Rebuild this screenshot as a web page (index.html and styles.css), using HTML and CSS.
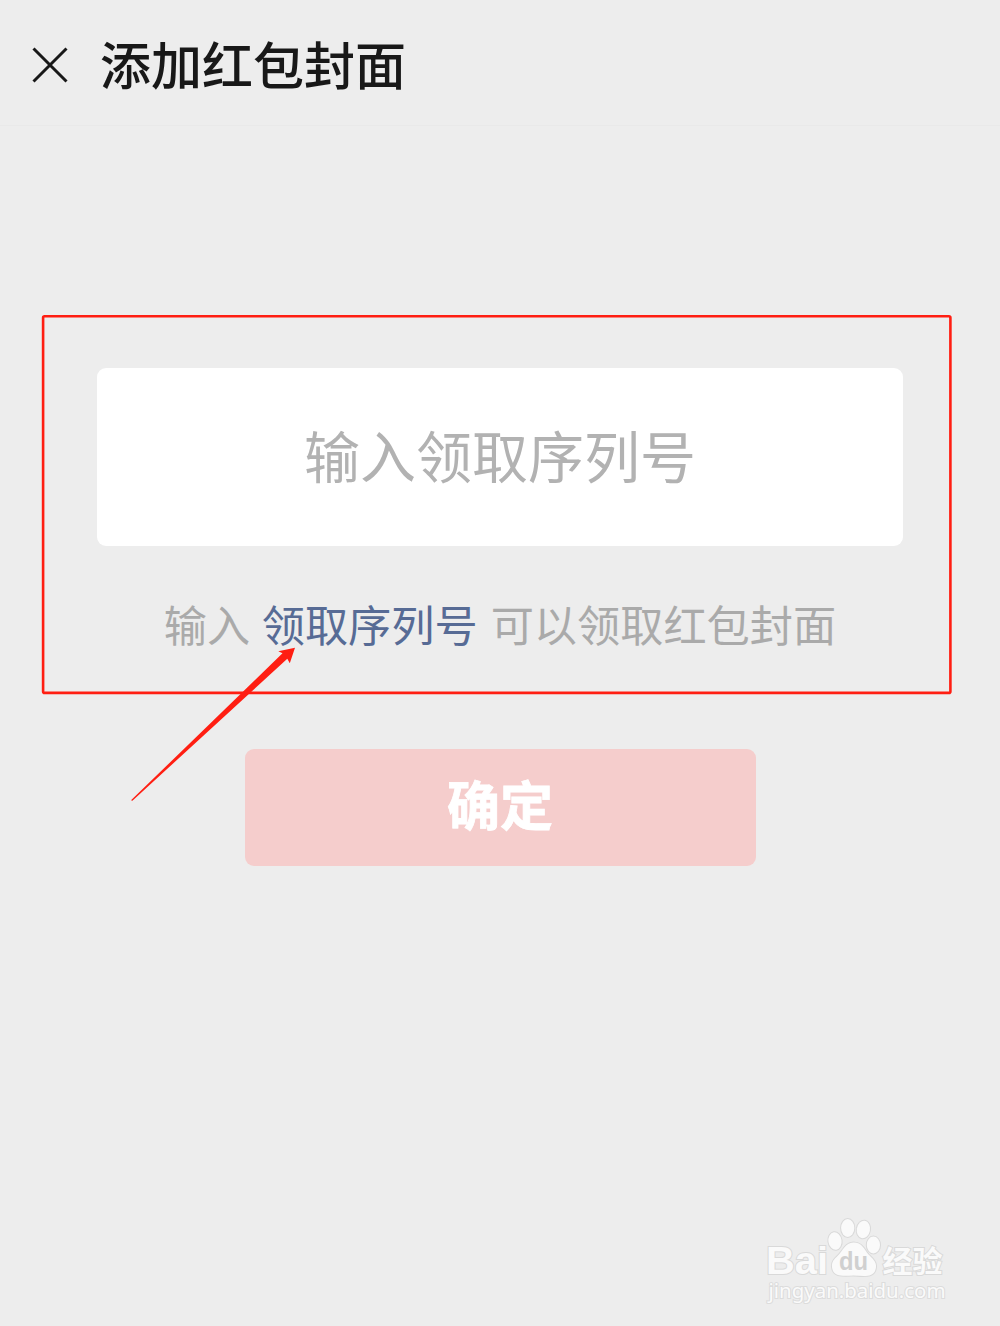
FILE: index.html
```html
<!DOCTYPE html>
<html lang="zh-CN">
<head>
    <title>添加红包封面</title>
    <meta charset="utf-8">
    <meta name="viewport" content="width=device-width, initial-scale=1">
    <link rel="stylesheet" href="styles.css">
</head>
<body>
    <header class="header">
        <svg class="close" viewBox="0 0 36 36">
            <path d="M1.5 1.5 L34.5 34.5 M34.5 1.5 L1.5 34.5" />
        </svg>
        <h1>添加红包封面</h1>
    </header>

    <main class="content">
        <input class="serial" type="text" placeholder="输入领取序列号">
        <p class="hint">输入<a class="link">领取序列号</a>可以领取红包封面</p>
        <button class="btn">确定</button>
    </main>

    <!-- red frame and arrow -->
    <svg class="marks" viewBox="0 0 1000 1326">
        <rect x="43.1" y="316.3" width="907.3" height="376.6" rx="1.5" />
        <path d="M131 800.3 L132.4 800.8 L287.3 658.7 L289.8 663.2 L295 647.8 L278.3 651.2 L282.5 653.3 Z" />
    </svg>

    <div class="watermark">
        <svg viewBox="0 0 200 100">
            <g class="logo">
                <text class="bai" x="16" y="64" textLength="62" lengthAdjust="spacingAndGlyphs">Bai</text>
                <ellipse cx="85" cy="31" rx="6.6" ry="8.8" transform="rotate(-8 85 31)" />
                <ellipse cx="97.7" cy="18" rx="6.6" ry="9" />
                <ellipse cx="113.4" cy="19.5" rx="6.6" ry="8.8" transform="rotate(10 113.4 19.5)" />
                <ellipse cx="123.4" cy="35" rx="6.6" ry="8.5" />
                <path d="M103.5 32.5 C95 32.5 93 41 87.500 46 C83 50 81.500 53 82 57 C83 67 92 66 103.500 65.500 C115 66 125 68 126 57 C126.500 52 123 49 118.500 44.500 C114 39 112 32.500 103.500 32.500 Z" />
                <text class="cn" x="132.5" y="61.5" textLength="60" lengthAdjust="spacingAndGlyphs">经验</text>
            </g>
            <text class="du" x="89" y="60" textLength="29" lengthAdjust="spacingAndGlyphs">du</text>
            <text class="site" x="18.5" y="88" textLength="177" lengthAdjust="spacingAndGlyphs">jingyan.baidu.com</text>
        </svg>
    </div>
</body>
</html>
```

FILE: styles.css
```css
* {
    box-sizing: border-box;
}
body {
    position: relative;
    margin: 0;
    height: 1326px;
    overflow: hidden;
    background-color: #ededed;
    font-family: "Noto Sans CJK SC", sans-serif;
}
.header {
    display: flex;
    align-items: center;
    height: 126px;
    padding: 0 32px;
    border-bottom: 1px solid #e9e9e9;
}
.close {
    width: 36px;
    height: 36px;
    margin: 4px 32px 0 0;
    fill: none;
    stroke: #181818;
    stroke-width: 3;
}
h1 {
    margin: 0;
    color: #181818;
    font-size: 51px;
    font-weight: 500;
    line-height: 74px;
}
.content {
    display: flex;
    flex-direction: column;
    align-items: center;
    padding-top: 242px;
}
.serial {
    width: 806px;
    height: 178px;
    padding: 0 0 8px;
    border: none;
    border-radius: 9px;
    background: white;
    font-family: inherit;
    font-size: 56px;
    text-align: center;
}
.serial::placeholder {
    color: #b2b2b2;
    opacity: 1;
}
.hint {
    margin: 45px 0 0;
    color: #aaa;
    font-size: 43.2px;
    line-height: 64px;
    white-space: nowrap;
}
.link {
    margin: 0 13px 0 11.5px;
    color: #576b95;
}
.btn {
    width: 511px;
    height: 117px;
    margin-top: 94px;
    padding: 0 0 10px;
    border: none;
    border-radius: 9px;
    background: #f5cdcc;
    color: white;
    font-family: inherit;
    font-size: 53px;
    font-weight: bold;
    -webkit-text-stroke: 0.8px white;
}
.marks {
    position: absolute;
    top: 0;
    left: 0;
    width: 1000px;
    height: 1326px;
    pointer-events: none;
}
.marks rect {
    fill: none;
    stroke: #ff1e12;
    stroke-width: 2.6;
}
.marks path {
    fill: #ff1e12;
}
.watermark {
    position: absolute;
    left: 750px;
    top: 1210px;
    width: 200px;
    height: 100px;
}
.logo {
    fill: #fafafa;
    stroke: #d9d9d9;
    stroke-width: 2;
    paint-order: stroke;
}
.bai {
    font: bold 39px "Liberation Sans", sans-serif;
}
.cn {
    font: bold 30px "Noto Sans CJK SC", sans-serif;
}
.du {
    fill: #d0d0d0;
    font: bold 25px "Liberation Sans", sans-serif;
}
.site {
    fill: #fafafa;
    stroke: #dcdcdc;
    stroke-width: 2;
    paint-order: stroke;
    font: 19px "Noto Sans", sans-serif;
}
```
